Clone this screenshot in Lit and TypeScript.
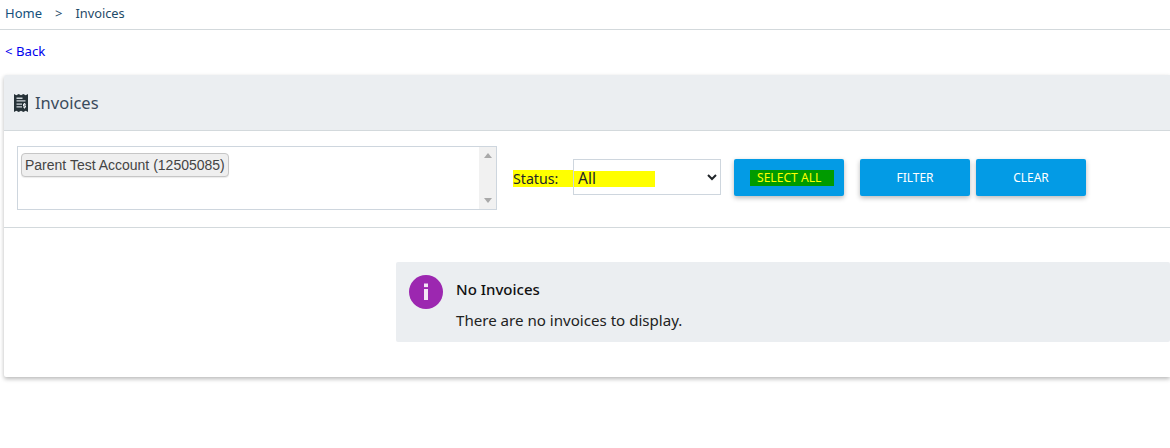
import { LitElement, html, css } from "lit";
import { customElement } from "lit/decorators.js";

@customElement("app-root")
export class AppRoot extends LitElement {
  static styles = css`
    :host { display: block; width: 1170px; height: 448px; overflow: hidden; background: #fff; font-family: "Noto Sans", "Open Sans", sans-serif; color: #212529; font-size: 14px; }
    .crumbs { height: 29px; box-sizing: content-box; border-bottom: 1px solid #d3d9dc; display: flex; align-items: flex-start; padding-left: 5px; color: #1f4a68; font-size: 13px; line-height: 27px; }
    .crumbs .home { color: #14507c; }
    .crumbs .sep { margin: 0 13px 0 13px; }
    .crumbs .last { font-size: 12.8px; }
    .back { height: 45px; padding: 12px 0 0 5px; font-size: 13.2px; line-height: 18px; box-sizing: border-box; }
    .back a { color: #0000ee; text-decoration: none; }
    .card { margin-left: 4px; height: 302px; border-radius: 2px 0 0 2px; box-shadow: 0 2px 4px rgba(0,0,0,.28); background: #fff; overflow: hidden; }
    .head { height: 55px; background: #ebeef1; border-bottom: 1px solid #d3d9dc; display: flex; align-items: center; padding-left: 10px; gap: 7px; font-size: 16.5px; color: #3a4b5c; }
    .head svg { display: block; }
    .filters { height: 97px; border-bottom: 1px solid #d3d9dc; display: flex; align-items: flex-start; box-sizing: border-box; padding-top: 15px; padding-left: 13px; }
    .list { width: 480px; height: 64px; box-sizing: border-box; border: 1px solid #ced6de; display: flex; justify-content: space-between; }
    .chip { margin: 6px 0 0 3px; height: 24px; box-sizing: border-box; padding: 0 3px; border: 1px solid #c6c6c6; border-radius: 4px; background: #efefef; font-family: "Liberation Sans", Arial, sans-serif; font-size: 14px; line-height: 23px; color: #444; white-space: nowrap; box-shadow: 0 1px 1px rgba(0,0,0,.08); }
    .scroll { width: 17px; background: #f1f1f1; display: flex; flex-direction: column; justify-content: space-between; align-items: center; padding: 6px 0; box-sizing: border-box; }
    .up { width: 0; height: 0; border: 4px solid transparent; border-top: 0; border-bottom: 5px solid #a9a9a9; }
    .down { width: 0; height: 0; border: 4px solid transparent; border-bottom: 0; border-top: 5px solid #a9a9a9; }
    .status { width: 60px; box-sizing: border-box; margin-left: 16px; margin-top: 24px; height: 17px; background: #ff0; font-size: 14.2px; line-height: 17px; color: #212529; }
    select { width: 148px; height: 36px; margin-top: 13px; box-sizing: border-box; border: 1px solid #ced6de; border-radius: 0; font-family: inherit; font-size: 15.5px; color: #212529; padding: 2px 0 0 0; background: #fff linear-gradient(#ff0, #ff0) no-repeat 0 11px / 81px 16px; }
    .btn { width: 110px; height: 37px; margin-top: 13px; border-radius: 2px; background: #039be5; color: #fff; font-size: 12px; display: flex; align-items: center; justify-content: center; box-shadow: 0 2px 5px rgba(0,0,0,.28); font-family: "Noto Sans", sans-serif; }
    .sel { margin-left: 13px; margin-right: 16px; padding-left: 6px; box-sizing: border-box; }
    .sel span { background: #009b00; color: #ff0; width: 84px; height: 16px; line-height: 16px; box-sizing: border-box; padding-left: 7px; white-space: nowrap; font-size: 12.1px; }
    .clear { margin-left: 6px; }
    .alertwrap { display: flex; padding: 34px 0 0 392px; }
    .alert { flex: 1; height: 80px; border-radius: 2px; background: #ebeef1; display: flex; padding: 13px 0 0 13px; box-sizing: border-box; gap: 13px; }
    .alert h4 { margin: 3px 0 0; font-size: 15px; font-weight: 500; line-height: 22px; color: #111; }
    .alert p { margin: 9px 0 0; font-size: 15.1px; line-height: 22px; color: #222; }
    .alert svg { display: block; }
  `;
  render() {
    return html`
      <div class="crumbs"><span class="home">Home</span><span class="sep">&gt;</span><span class="last">Invoices</span></div>
      <div class="back"><a href="#">&lt; Back</a></div>
      <div class="card">
        <div class="head">
          <svg width="14" height="18" viewBox="0 0 14 18"><path fill="#263238" d="M0 0l2.3 1.3L4.7 0 7 1.3 9.3 0l2.4 1.3L14 0v18l-2.3-1.3L9.3 18 7 16.7 4.7 18l-2.4-1.3L0 18z"/><path fill="#cfd5da" d="M2.5 3.5h6v1.4h-6zM2.5 6.3h9v1.2h-9zM2.5 9.5h5.5v1.2H2.5zM2.5 12.3h5.5v1.2H2.5z"/><path fill="#e9ecef" d="M10 9h1v.8h1v1h-1.6v.6H12v2.2h-1v.8h-1v-.8H9v-1h1.6v-.6H9v-2.2h1z"/></svg>
          <span>Invoices</span>
        </div>
        <div class="filters">
          <div class="list">
            <div class="chip">Parent Test Account (12505085)</div>
            <div class="scroll"><i class="up"></i><i class="down"></i></div>
          </div>
          <div class="status">Status:</div>
          <select><option>All</option></select>
          <div class="btn sel"><span>SELECT ALL</span></div>
          <div class="btn">FILTER</div>
          <div class="btn clear">CLEAR</div>
        </div>
        <div class="alertwrap">
          <div class="alert">
            <svg width="34" height="34" viewBox="0 0 34 34"><circle cx="17" cy="17" r="17" fill="#9c27b0"/><rect x="15" y="14" width="4" height="11" fill="#f3e5f5"/><rect x="15" y="8.5" width="4" height="3.6" fill="#f3e5f5"/></svg>
            <div><h4>No Invoices</h4><p>There are no invoices to display.</p></div>
          </div>
        </div>
      </div>
    `;
  }
}
